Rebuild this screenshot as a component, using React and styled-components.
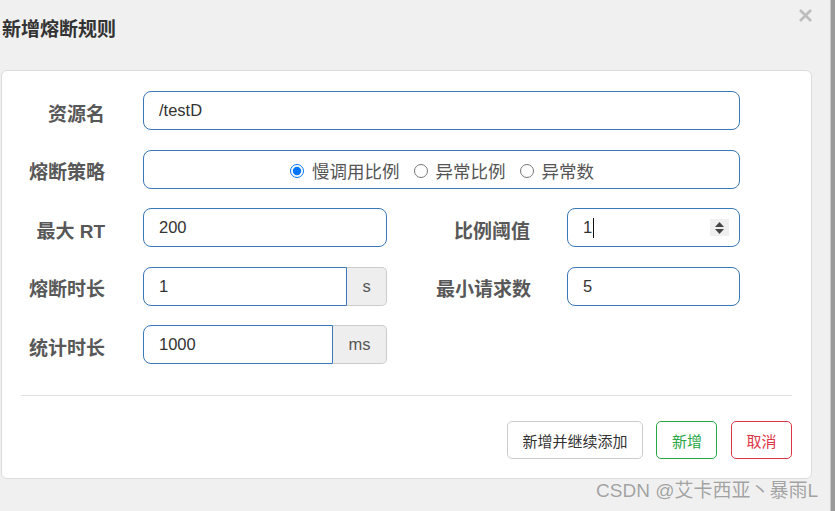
import React from "react";
import styled, { createGlobalStyle } from "styled-components";

const FONT = `"Liberation Sans", "Noto Sans CJK SC", sans-serif`;

const GlobalStyle = createGlobalStyle`
  html, body {
    margin: 0;
    padding: 0;
    background: #f0f0f0;
    font-family: ${FONT};
  }
`;

const Page = styled.div`
  display: flex;
  width: 835px;
  height: 511px;
  overflow: hidden;
`;

const Main = styled.div`
  display: flex;
  flex-direction: column;
  width: 831px;
`;

const ScrollEdge = styled.div`
  width: 4px;
  background: #9a9a9a;
  border-left: 1px solid #c8c8c8;
`;

const Header = styled.div`
  display: flex;
  justify-content: space-between;
  height: 70px;
`;

const Title = styled.h4`
  margin: 19px 0 0 2px;
  font-size: 19px;
  line-height: 22px;
  font-weight: 700;
  color: #333;
`;

const Close = styled.button`
  align-self: flex-start;
  margin: 8px 17px 0 0;
  padding: 0;
  width: 15px;
  height: 15px;
  border: none;
  background: none;
  display: flex;
`;

const Card = styled.div`
  margin-left: 1px;
  width: 811px;
  height: 409px;
  box-sizing: border-box;
  background: #fff;
  border: 1px solid #dcdcdc;
  border-radius: 6px;
  display: flex;
  flex-direction: column;
`;

const Form = styled.div`
  display: grid;
  grid-template-columns: 141px 244px 180px 173px;
  grid-auto-rows: 39px;
  row-gap: 19.5px;
  padding-top: 20px;
`;

const Label = styled.label`
  display: flex;
  align-items: center;
  justify-content: flex-end;
  padding-right: ${(p) => p.$pad || 38}px;
  padding-top: 3px;
  font-size: 19px;
  font-weight: 700;
  color: #585858;
  white-space: nowrap;
`;

const Box = styled.div`
  grid-column: ${(p) => (p.$wide ? "2 / 5" : "auto")};
  display: flex;
  align-items: center;
  box-sizing: border-box;
  height: 39px;
  border: 1px solid #3a78b8;
  border-radius: ${(p) => (p.$addon ? "8px 0 0 8px" : "8px")};
  background: #fff;
  padding: 0 14px 0 15px;
  font-size: 16.5px;
  color: #333;
  flex: 1;
  min-width: 0;
`;

const Input = styled.input`
  border: none;
  outline: none;
  background: none;
  padding: 0;
  width: 100%;
  font: inherit;
  color: inherit;
`;

const Group = styled.div`
  display: flex;
`;

const Addon = styled.span`
  display: flex;
  align-items: center;
  justify-content: center;
  width: ${(p) => p.$w}px;
  box-sizing: border-box;
  background: #eee;
  border: 1px solid #ccc;
  border-left: none;
  border-radius: 0 5px 5px 0;
  font-size: 16.5px;
  color: #555;
`;

const Radios = styled.div`
  display: flex;
  justify-content: center;
  align-items: center;
  width: 100%;
  padding-top: 3px;
  gap: 14px;
`;

const Radio = styled.label`
  display: flex;
  align-items: center;
  gap: 8px;
  font-size: 17.5px;
  color: #555;

  input {
    margin: 0;
    width: 14px;
    height: 14px;
    accent-color: #0075ff;
  }
`;

const Value = styled.span`
  color: #333;
`;

const Caret = styled.span`
  width: 1px;
  height: 20px;
  margin-left: 1px;
  background: #111;
`;

const Spinner = styled.span`
  margin-left: auto;
  margin-right: -4px;
  display: flex;
  flex-direction: column;
  align-items: center;
  justify-content: center;
  gap: 2px;
  width: 19px;
  height: 17px;
  background: #efefef;
`;

const Divider = styled.hr`
  margin: 31px 19px 0;
  border: none;
  border-top: 1px solid #e2e2e2;
`;

const Footer = styled.div`
  display: flex;
  justify-content: flex-end;
  gap: 13.5px;
  padding: 25px 19px 0 0;
`;

const Button = styled.button`
  height: 38px;
  padding: 0 14.5px;
  box-sizing: border-box;
  background: #fff;
  border: 1px solid ${(p) => p.$c || "#ccc"};
  border-radius: 5px;
  color: ${(p) => p.$t || "#333"};
  font-family: ${FONT};
  font-size: 15px;
`;

const Watermark = styled.div`
  align-self: flex-end;
  margin: 0 12px 0 0;
  font-size: 19px;
  line-height: 24px;
  color: #a2a2a2;
  text-shadow: 0 0 1px #fff;
`;

const Tri = ({ up }) => (
  <svg width="9" height="5" viewBox="0 0 9 5">
    <path d={up ? "M0 5 L4.5 0 L9 5 Z" : "M0 0 L4.5 5 L9 0 Z"} fill="#444" />
  </svg>
);

export default function App() {
  return (
    <>
      <GlobalStyle />
      <Page>
        <Main>
          <Header>
            <Title>新增熔断规则</Title>
            <Close aria-label="关闭">
              <svg width="15" height="15" viewBox="0 0 15 15">
                <path d="M2 2 L13 13 M13 2 L2 13" stroke="#bdbdbd" strokeWidth="2.6" />
              </svg>
            </Close>
          </Header>
          <Card>
            <Form>
              <Label>资源名</Label>
              <Box $wide>
                <Input defaultValue="/testD" />
              </Box>

              <Label>熔断策略</Label>
              <Box $wide>
                <Radios>
                  <Radio>
                    <input type="radio" name="strategy" defaultChecked />
                    慢调用比例
                  </Radio>
                  <Radio>
                    <input type="radio" name="strategy" />
                    异常比例
                  </Radio>
                  <Radio>
                    <input type="radio" name="strategy" />
                    异常数
                  </Radio>
                </Radios>
              </Box>

              <Label>最大 RT</Label>
              <Box>
                <Input defaultValue="200" />
              </Box>
              <Label $pad={37}>比例阈值</Label>
              <Box>
                <Value>1</Value>
                <Caret />
                <Spinner>
                  <Tri up />
                  <Tri />
                </Spinner>
              </Box>

              <Label>熔断时长</Label>
              <Group>
                <Box $addon>
                  <Input defaultValue="1" />
                </Box>
                <Addon $w={40}>s</Addon>
              </Group>
              <Label $pad={36}>最小请求数</Label>
              <Box>
                <Input defaultValue="5" />
              </Box>

              <Label>统计时长</Label>
              <Group>
                <Box $addon>
                  <Input defaultValue="1000" />
                </Box>
                <Addon $w={54}>ms</Addon>
              </Group>
            </Form>
            <Divider />
            <Footer>
              <Button>新增并继续添加</Button>
              <Button $c="#28a745" $t="#28a745">新增</Button>
              <Button $c="#dc3545" $t="#dc3545">取消</Button>
            </Footer>
          </Card>
          <Watermark>CSDN @艾卡西亚丶暴雨L</Watermark>
        </Main>
        <ScrollEdge />
      </Page>
    </>
  );
}
